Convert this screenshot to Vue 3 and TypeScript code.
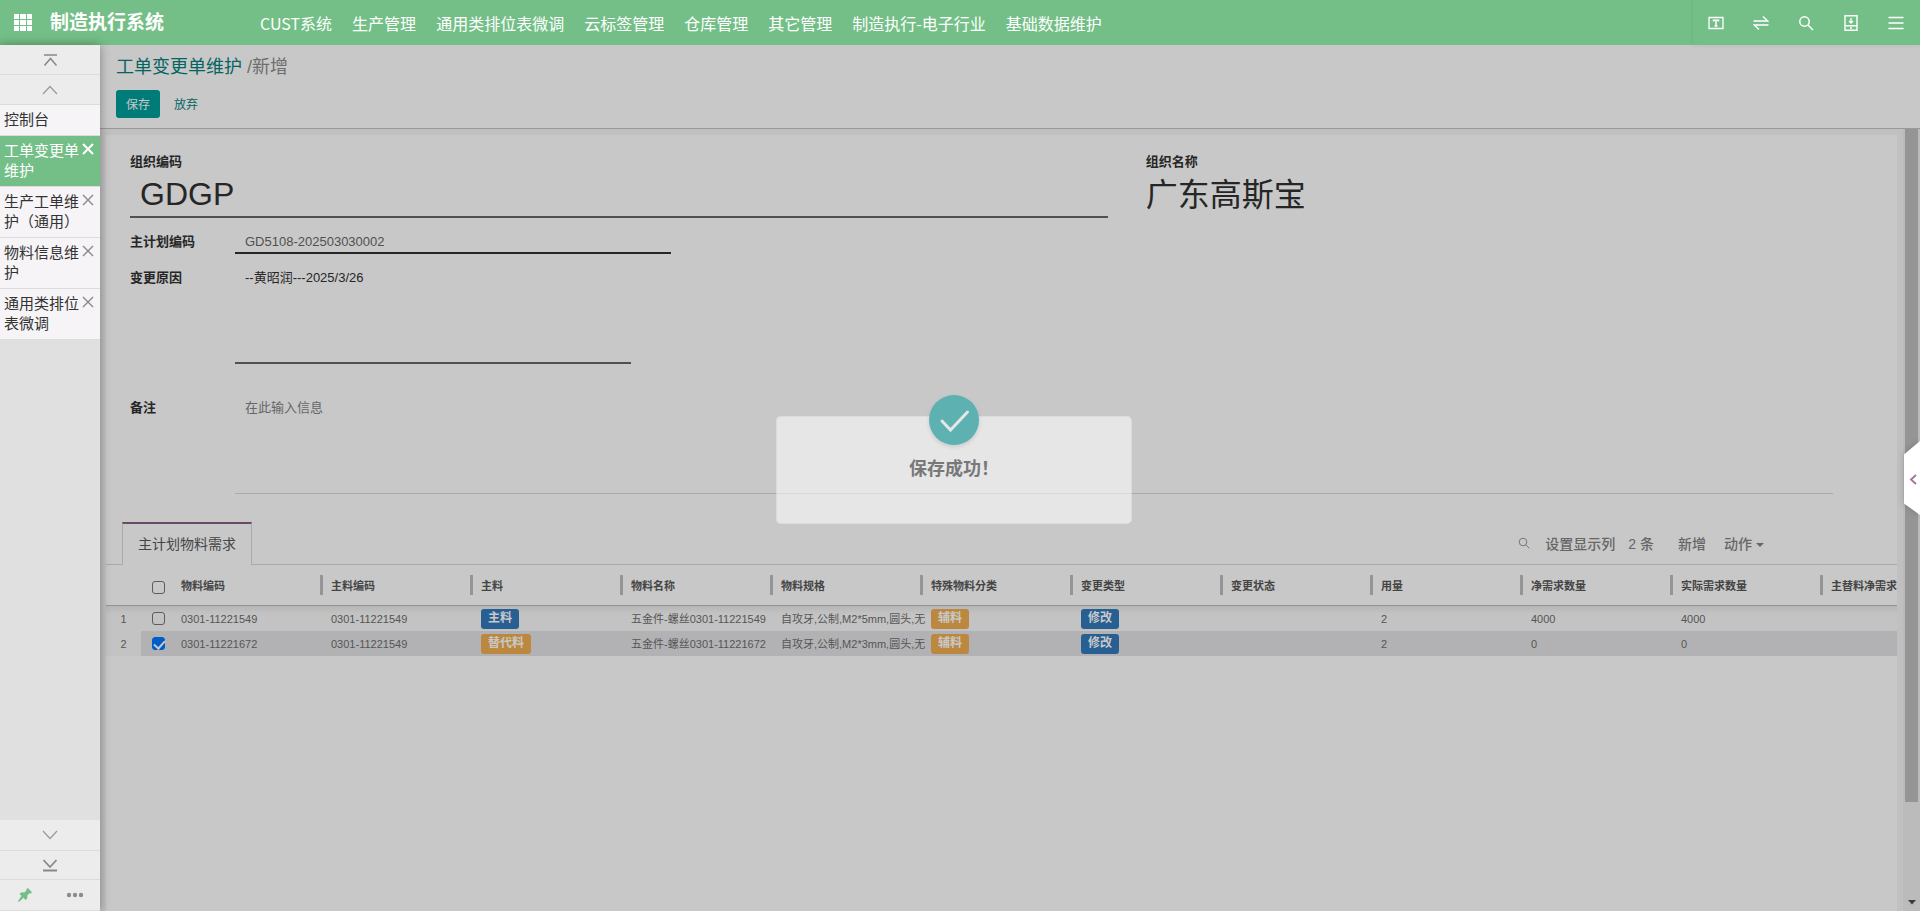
<script setup lang="ts">
import { ref } from 'vue'

interface MaterialRow {
  id: number
  checked: boolean
  code: string
  mainCode: string
  kind: string
  kindTone: 'blue' | 'amber'
  name: string
  spec: string
  special: string
  change: string
  state: string
  usage: number
  netQty: number
  actualQty: number
}

const navItems: string[] = [
  'CUST系统',
  '生产管理',
  '通用类排位表微调',
  '云标签管理',
  '仓库管理',
  '其它管理',
  '制造执行-电子行业',
  '基础数据维护',
]

const openTabs: string[] = ['工单变更单维护', '生产工单维护（通用）', '物料信息维护', '通用类排位表微调']
const activeTab = ref<string>('工单变更单维护')

const columns: string[] = [
  '物料编码',
  '主料编码',
  '主料',
  '物料名称',
  '物料规格',
  '特殊物料分类',
  '变更类型',
  '变更状态',
  '用量',
  '净需求数量',
  '实际需求数量',
  '主替料净需求',
]

const orgCode = ref('GDGP')
const planCode = ref('GD5108-202503030002')
const reason = ref('--黄昭润---2025/3/26')
const remark = ref('')
const allChecked = ref(false)

const rows = ref<MaterialRow[]>([
  {
    id: 1,
    checked: false,
    code: '0301-11221549',
    mainCode: '0301-11221549',
    kind: '主料',
    kindTone: 'blue',
    name: '五金件-螺丝0301-11221549',
    spec: '自攻牙,公制,M2*5mm,圆头,无',
    special: '辅料',
    change: '修改',
    state: '',
    usage: 2,
    netQty: 4000,
    actualQty: 4000,
  },
  {
    id: 2,
    checked: true,
    code: '0301-11221672',
    mainCode: '0301-11221549',
    kind: '替代料',
    kindTone: 'amber',
    name: '五金件-螺丝0301-11221672',
    spec: '自攻牙,公制,M2*3mm,圆头,无',
    special: '辅料',
    change: '修改',
    state: '',
    usage: 2,
    netQty: 0,
    actualQty: 0,
  },
])
</script>

<template>
  <div class="app">
    <header class="topbar">
      <button class="apps" type="button" aria-label="应用">
        <svg width="18" height="17" viewBox="0 0 18 17" fill="#fff">
          <path d="M0 0h5v5H0zM6 0h6v5H6zM13 0h5v5h-5zM0 6h5v5H0zM6 6h6v5H6zM13 6h5v5h-5zM0 12h5v5H0zM6 12h6v5H6zM13 12h5v5h-5z" />
        </svg>
      </button>
      <h1 class="brand">制造执行系统</h1>
      <nav class="nav">
        <a v-for="item in navItems" :key="item" href="#">{{ item }}</a>
      </nav>
      <div class="tools">
        <button type="button" aria-label="主题">
          <svg width="16" height="16" viewBox="0 0 16 16" fill="none" stroke="#fff">
            <path d="M1 2.500h14v11H1z" stroke-width="1.300" />
            <path d="M5.500 6.500V5.200h5v1.300M8 5.200v5.600M6.500 10.900h3" stroke-width="1.500" />
          </svg>
        </button>
        <button type="button" aria-label="切换">
          <svg width="16" height="16" viewBox="0 0 16 16" fill="none" stroke="#fff" stroke-width="1.400">
            <path d="M.5 6h14.200L10 1.500M15.500 10H1.300L6 14.500" />
          </svg>
        </button>
        <button type="button" aria-label="搜索">
          <svg width="16" height="16" viewBox="0 0 16 16" fill="none" stroke="#fff" stroke-width="1.500">
            <circle cx="6.500" cy="6.500" r="4.700" />
            <path d="M10 10l5 5" />
          </svg>
        </button>
        <button type="button" aria-label="下载">
          <svg width="16" height="16" viewBox="0 0 16 16" fill="none" stroke="#fff" stroke-width="1.400">
            <path d="M2 .7h12v14.600H2zM2 10.700h12M8 3v5M6 6l2 2 2-2M7 13h2" />
          </svg>
        </button>
        <button type="button" aria-label="菜单">
          <svg width="16" height="16" viewBox="0 0 16 16" fill="none" stroke="#fff" stroke-width="1.300">
            <path d="M.5 2.500h15M.5 8h15M.5 13.500h15" />
          </svg>
        </button>
      </div>
    </header>

    <div class="body">
      <aside class="side">
        <button class="step" type="button" aria-label="到顶部">
          <svg width="16" height="14" viewBox="0 0 16 14" fill="none" stroke="#888" stroke-width="1.500">
            <path d="M2 2h13M2.500 12.500l6-7 6 7" />
          </svg>
        </button>
        <button class="step" type="button" aria-label="向上">
          <svg width="16" height="10" viewBox="0 0 16 10" fill="none" stroke="#999" stroke-width="1.200">
            <path d="M1 9l7-7.500L15 9" />
          </svg>
        </button>
        <a class="tab home" href="#">控制台</a>
        <div v-for="t in openTabs" :key="t" class="tab" :class="{ active: t === activeTab }">
          <a href="#" @click.prevent="activeTab = t">{{ t }}</a>
          <button type="button" :aria-label="'关闭' + t">
            <svg width="12" height="12" viewBox="0 0 12 12" fill="none" stroke="currentColor">
              <path d="M1 1l10 10M11 1L1 11" />
            </svg>
          </button>
        </div>
        <div class="filler"></div>
        <button class="step tall" type="button" aria-label="向下">
          <svg width="16" height="10" viewBox="0 0 16 10" fill="none" stroke="#999" stroke-width="1.200">
            <path d="M1 1l7 7.500L15 1" />
          </svg>
        </button>
        <button class="step short" type="button" aria-label="到底部">
          <svg width="16" height="13" viewBox="0 0 16 13" fill="none" stroke="#888" stroke-width="1.800">
            <path d="M1.500 1L8 8l6.500-7M1 11.500h14" />
          </svg>
        </button>
        <div class="pinbar">
          <button type="button" aria-label="固定">
            <svg width="14" height="14" viewBox="0 0 14 14" fill="#74bf87">
              <path d="M8.800.6q.8-.8 1.600 0l3 3q.8.9-.2 1.600-1 .5-1.700 0L9.300 7.400q.6 2.500-1 4.100-.6.5-1.200 0L4.800 9.300 2 6.400q-.5-.6.1-1.200Q3.600 3.900 6.200 4.500L8.600 2.200Q8.200 1.200 8.800.6z" />
              <path d="M3.500 7.800l2 2-4 3.600L0 13.900l.5-1.500z" />
            </svg>
          </button>
          <button type="button" aria-label="更多">
            <svg width="18" height="6" viewBox="0 0 18 6" fill="#8c8c8c">
              <circle cx="3" cy="3" r="2.200" /><circle cx="9" cy="3" r="2.200" /><circle cx="15" cy="3" r="2.200" />
            </svg>
          </button>
        </div>
      </aside>

      <main class="main">
        <section class="control">
          <p class="crumb"><a href="#">工单变更单维护</a> /新增</p>
          <div class="actions">
            <button class="save" type="button">保存</button>
            <button class="discard" type="button">放弃</button>
          </div>
        </section>

        <div class="scroller">
          <div class="sheet">
            <form class="form" @submit.prevent>
              <div class="org">
                <div class="orgcol">
                  <label for="org-code">组织编码</label>
                  <input id="org-code" v-model="orgCode" class="big" type="text" />
                </div>
                <div class="orgcol">
                  <span class="caption">组织名称</span>
                  <span class="bigtext">广东高斯宝</span>
                </div>
              </div>
              <div class="field">
                <label for="plan-code">主计划编码</label>
                <input id="plan-code" v-model="planCode" class="plan" type="text" />
              </div>
              <div class="field">
                <label for="reason">变更原因</label>
                <textarea id="reason" v-model="reason" class="reason"></textarea>
              </div>
              <div class="field last">
                <label for="remark">备注</label>
                <textarea id="remark" v-model="remark" class="remark" placeholder="在此输入信息"></textarea>
              </div>
            </form>

            <div class="tabrow">
              <button class="sheettab" type="button">主计划物料需求</button>
              <div class="tabletools">
                <button class="find" type="button" aria-label="查找">
                  <svg width="12" height="12" viewBox="0 0 12 12" fill="none" stroke="#777">
                    <circle cx="5" cy="5" r="3.800" />
                    <path d="M7.800 7.800l3.500 3.500" />
                  </svg>
                </button>
                <button class="cols" type="button">设置显示列</button>
                <span class="count">2 条</span>
                <button class="add" type="button">新增</button>
                <button class="more" type="button">动作<i class="caret"></i></button>
              </div>
            </div>

            <div class="tablewrap">
              <table>
                <colgroup>
                  <col class="cnum" />
                  <col class="ccheck" />
                  <col v-for="c in columns" :key="c" class="cdata" />
                </colgroup>
                <thead>
                  <tr>
                    <th class="plain"></th>
                    <th class="plain headcheck"><input v-model="allChecked" type="checkbox" aria-label="全选" /></th>
                    <th v-for="c in columns" :key="c">{{ c }}</th>
                  </tr>
                </thead>
                <tbody>
                  <tr v-for="r in rows" :key="r.id" :class="{ selected: r.checked }">
                    <td class="num">{{ r.id }}</td>
                    <td class="check"><input v-model="r.checked" type="checkbox" :aria-label="'选择第' + r.id + '行'" /></td>
                    <td>{{ r.code }}</td>
                    <td>{{ r.mainCode }}</td>
                    <td><span class="badge" :class="r.kindTone">{{ r.kind }}</span></td>
                    <td>{{ r.name }}</td>
                    <td>{{ r.spec }}</td>
                    <td><span class="badge amber">{{ r.special }}</span></td>
                    <td><span class="badge blue">{{ r.change }}</span></td>
                    <td>{{ r.state }}</td>
                    <td>{{ r.usage }}</td>
                    <td>{{ r.netQty }}</td>
                    <td>{{ r.actualQty }}</td>
                    <td></td>
                  </tr>
                </tbody>
              </table>
            </div>
          </div>
          <div class="rail">
            <div class="thumb"></div>
            <svg class="down" width="8" height="5" viewBox="0 0 8 5" fill="#3c3c3c"><path d="M0 0h8L4 4.500z" /></svg>
          </div>
        </div>
      </main>
    </div>

    <button class="handle" type="button" aria-label="展开面板">
      <svg width="16" height="74" viewBox="0 0 16 74">
        <path d="M16 0L0 13.500v49L16 74z" fill="#fff" />
        <path d="M12 34l-5 4.500 5 4.500" fill="none" stroke="#a0749a" stroke-width="1.800" />
      </svg>
    </button>

    <div class="overlay">
      <div class="toast" role="status">
        <span class="ok">
          <svg width="50" height="50" viewBox="0 0 50 50" fill="none" stroke="#e6e6e6" stroke-width="3" stroke-linecap="round">
            <path d="M13 26l8.500 9L38.500 17" />
          </svg>
        </span>
        <p>保存成功！</p>
      </div>
    </div>
  </div>
</template>

<style>
body {
  margin: 0;
  overflow: hidden;
}
</style>

<style scoped>
.app {
  position: relative;
  display: flex;
  flex-direction: column;
  height: 100vh;
  overflow: hidden;
  background: #c8c8c8;
  color: #262626;
  font-family: "Liberation Sans", "Noto Sans CJK SC", sans-serif;
  font-size: 13px;
}
* {
  box-sizing: border-box;
}
a {
  color: inherit;
  text-decoration: none;
}
button {
  display: flex;
  align-items: center;
  justify-content: center;
  margin: 0;
  padding: 0;
  border: 0;
  background: none;
  color: inherit;
  font: inherit;
}
p,
h1 {
  margin: 0;
}

.topbar {
  display: flex;
  align-items: center;
  height: 45px;
  flex: none;
  background: #74bf87;
  color: #fff;
}
.apps {
  width: 50px;
  height: 45px;
  padding-right: 4px;
}
.brand {
  width: 200px;
  font-size: 19px;
  line-height: 46px;
}
.nav {
  display: flex;
  flex: 1;
}
.nav a {
  padding: 0 10px;
  font-family: "Noto Sans CJK SC", sans-serif;
  font-size: 16px;
  line-height: 46px;
  white-space: nowrap;
}
.tools {
  display: flex;
  height: 45px;
  padding-right: 2px;
  box-shadow: 0 0 4px rgba(0, 0, 0, 0.1);
}
.tools button {
  width: 45px;
}

.body {
  display: flex;
  flex: 1;
  min-height: 0;
}
.side {
  z-index: 1;
  display: flex;
  flex-direction: column;
  width: 100px;
  flex: none;
  background: #e0e0e0;
  box-shadow: 0 0 10px rgba(0, 0, 0, 0.35);
  color: #262626;
}
.step {
  height: 30px;
  flex: none;
  border-bottom: 1px solid #dcdcdc;
  background: #ececec;
}
.step.short {
  height: 29px;
}
.step.tall {
  height: 31px;
}
.tab {
  display: flex;
  flex: none;
  padding: 5px 5px 5px 4px;
  border-bottom: 1px solid #dcdcdc;
  background: #f6f4f6;
  color: #333;
  font-size: 15px;
  line-height: 20px;
}
.tab a {
  width: 77px;
}
.tab button {
  width: 14px;
  height: 16px;
  color: #888;
  stroke-width: 1.4;
}
.tab.active {
  background: #74bf87;
  color: #fff;
}
.tab.active button {
  color: #fff;
  stroke-width: 2;
}
.filler {
  flex: 1;
}
.pinbar {
  display: flex;
  height: 31px;
  flex: none;
  border-bottom: 1px solid #dcdcdc;
  background: #ececec;
}
.pinbar button {
  flex: 1;
}

.main {
  display: flex;
  flex: 1;
  flex-direction: column;
  min-width: 0;
}
.control {
  flex: none;
  padding: 9px 16px 10px;
  border-bottom: 1px solid #999;
}
.crumb {
  color: #6e6e6e;
  font-size: 18px;
  line-height: 27px;
}
.crumb a {
  color: #046462;
}
.actions {
  display: flex;
  gap: 14px;
  padding-top: 9px;
}
.actions button {
  height: 28px;
  padding-bottom: 2px;
  font-size: 12px;
}
.actions .save {
  padding: 0 10px 2px;
  border-radius: 3px;
  background: #007c78;
  color: #c8c8c8;
}
.discard {
  color: #046462;
}

.scroller {
  display: flex;
  flex: 1;
  min-height: 0;
  background: #c0c0c0;
}
.sheet {
  flex: 1;
  min-width: 0;
  margin: 6px 6px 0 6px;
  background: #c8c8c8;
}
.rail {
  display: flex;
  flex-direction: column;
  align-items: center;
  justify-content: space-between;
  width: 17px;
  background: #bbb;
}
.thumb {
  width: 13px;
  height: 86%;
  background: #959595;
}
.down {
  margin-bottom: 6px;
}

.form {
  padding: 17px 64px 0 24px;
}
.org {
  display: grid;
  grid-template-columns: 37fr 26fr;
  gap: 38px;
}
.orgcol {
  display: flex;
  flex-direction: column;
}
label,
.caption {
  font-weight: bold;
  line-height: 20px;
}
input[type='text'],
textarea {
  margin: 0;
  padding: 0 10px;
  border: 0;
  border-bottom: 2px solid #505050;
  border-radius: 0;
  outline: 0;
  background: transparent;
  color: inherit;
  font: inherit;
  resize: none;
}
input.big {
  height: 46px;
  font-size: 32px;
}
.bigtext {
  font-size: 32px;
  line-height: 46px;
}
.field {
  display: flex;
  margin-top: 12px;
}
.field label {
  width: 105px;
  flex: none;
  padding-top: 2px;
}
input.plan {
  width: 436px;
  height: 24px;
  border-bottom-color: #262626;
  color: #505050;
}
textarea {
  height: 98px;
  padding-top: 2px;
  line-height: 20px;
}
.reason {
  width: 396px;
}
.field.last {
  margin-top: 32px;
}
textarea.remark {
  flex: 1;
  border-bottom: 1px solid #aaa;
}
textarea::placeholder {
  color: #666;
  opacity: 1;
}

.tabrow {
  display: flex;
  justify-content: space-between;
  height: 43px;
  margin-top: 28px;
  padding: 0 133px 0 16px;
  border-bottom: 1px solid #aaa;
  font-size: 14px;
}
.sheettab {
  height: 43px;
  padding: 0 15px 4px;
  border: 1px solid #aaa;
  border-top: 2px solid #6b4a66;
  border-bottom: 0;
  background: #c8c8c8;
  color: #444;
}
.tabletools {
  display: flex;
  align-items: center;
  color: #666;
  font-weight: 500;
}
.find {
  margin-right: 15px;
}
.cols {
  margin-right: 13px;
}
.count {
  margin-right: 24px;
}
.add {
  margin-right: 18px;
}
.caret {
  margin: 4px 0 0 4px;
  border: 4px solid transparent;
  border-top-color: #666;
  border-bottom: 0;
}

.tablewrap {
  overflow: hidden;
}
table {
  width: 1867px;
  border-collapse: separate;
  border-spacing: 0;
  table-layout: fixed;
  font-size: 11px;
}
.cnum {
  width: 35px;
}
.ccheck {
  width: 32px;
}
.cdata {
  width: 150px;
}
th {
  height: 41px;
  padding: 0 8px;
  border-bottom: 1px solid #959595;
  background: linear-gradient(#959595, #959595) right center / 3px 20px no-repeat;
  color: #444;
  text-align: left;
  white-space: nowrap;
}
th.plain {
  background: none;
}
th.headcheck {
  padding: 4px 8px 0 11px;
}
td {
  height: 25px;
  padding: 0 0 0 8px;
  color: #555;
  line-height: 20px;
  white-space: nowrap;
}
tbody tr {
  background: #c3c3c3;
}
tbody tr:first-child {
  background: linear-gradient(#b6b6b6, #c3c3c3 8px);
}
tbody tr.selected {
  background: #b2b2b4;
}
td.num {
  padding: 0;
  text-align: center;
}
tbody tr.selected td.num {
  background: #c3c3c3;
}
td.check {
  padding-left: 11px;
}
input[type='checkbox'] {
  display: block;
  width: 13px;
  height: 13px;
  margin: 0;
  border: 1px solid #5c5c5c;
  border-radius: 3px;
  appearance: none;
}
input[type='checkbox']:checked {
  border-color: #005cc8;
  background: #005cc8;
}
input[type='checkbox']:checked::after {
  display: block;
  width: 5px;
  height: 9px;
  margin: 0 0 0 3px;
  border: solid #c8c8c8;
  border-width: 0 2px 2px 0;
  content: '';
  transform: rotate(42deg);
}
.badge {
  display: block;
  width: fit-content;
  height: 20px;
  padding: 0 7px;
  border-radius: 3px;
  color: #c8c8c8;
  font-size: 12px;
  font-weight: bold;
  line-height: 18px;
}
.blue {
  background: #285f92;
}
.amber {
  background: #bc8840;
}

.handle {
  position: absolute;
  z-index: 3;
  top: 441px;
  right: 0;
  filter: drop-shadow(0 0 3px rgba(0, 0, 0, 0.2));
}
.overlay {
  position: absolute;
  z-index: 2;
  inset: 29px 12px 0 0;
  display: flex;
  align-items: center;
  justify-content: center;
  pointer-events: none;
}
.toast {
  position: relative;
  width: 356px;
  height: 108px;
  padding-top: 39px;
  border: 1px solid rgba(180, 180, 180, 0.2);
  border-radius: 5px;
  background: rgba(255, 255, 255, 0.55);
  color: #78787a;
  font-size: 18px;
  font-weight: bold;
  line-height: 26px;
  text-align: center;
}
.ok {
  position: absolute;
  top: -22px;
  left: calc(50% - 25px);
  width: 50px;
  height: 50px;
  border-radius: 50%;
  background: #5db1b1;
  box-shadow: 0 2px 4px rgba(0, 0, 0, 0.12);
}
</style>
